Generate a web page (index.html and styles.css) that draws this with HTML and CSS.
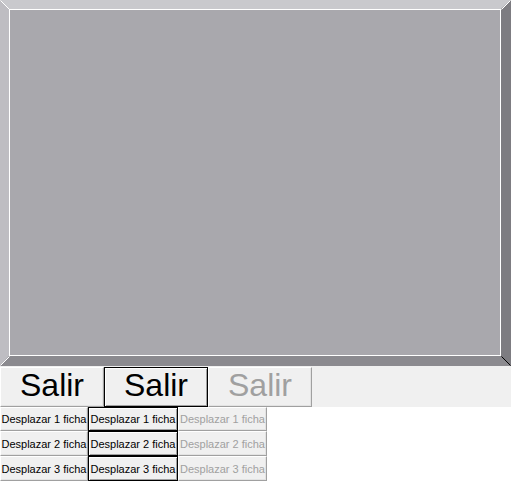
FILE: index.html
```html
<!DOCTYPE html>
<html>
<head>
<meta charset="utf-8">
<link rel="stylesheet" href="styles.css">
</head>
<body>
<div class="panel">
  <div class="panel-inner"></div>
  <svg class="bevel-lines" width="511" height="366" viewBox="0 0 511 366">
    <line x1="0.5" y1="0.5" x2="9.5" y2="9.5" stroke="#ffffff" stroke-width="1"/>
    <line x1="510.5" y1="0.5" x2="501.5" y2="9.5" stroke="#ffffff" stroke-width="1"/>
    <line x1="0.5" y1="365.5" x2="9.5" y2="356.5" stroke="#ffffff" stroke-width="1"/>
    <line x1="501.5" y1="356.5" x2="510.5" y2="365.5" stroke="#000000" stroke-width="1"/>
  </svg>
</div>
<div class="big-row">
  <button class="btn big">Salir</button>
  <button class="btn big default">Salir</button>
  <button class="btn big disabled">Salir</button>
</div>
<div class="small-grid">
  <button class="btn small">Desplazar 1 ficha</button>
  <button class="btn small default">Desplazar 1 ficha</button>
  <button class="btn small disabled">Desplazar 1 ficha</button>
  <button class="btn small">Desplazar 2 ficha</button>
  <button class="btn small default">Desplazar 2 ficha</button>
  <button class="btn small disabled">Desplazar 2 ficha</button>
  <button class="btn small">Desplazar 3 ficha</button>
  <button class="btn small default">Desplazar 3 ficha</button>
  <button class="btn small disabled">Desplazar 3 ficha</button>
</div>
</body>
</html>
```

FILE: styles.css
```css
html, body {
  margin: 0;
  padding: 0;
  background: #ffffff;
  font-family: "Liberation Sans", Arial, sans-serif;
}

.panel {
  position: relative;
  width: 511px;
  height: 366px;
  box-sizing: border-box;
  border-style: solid;
  border-width: 9px 10px 10px 9px;
  border-top-color: #c9c9cd;
  border-left-color: #bebdc2;
  border-right-color: #7d7c81;
  border-bottom-color: #8b8a8f;
}

.panel-inner {
  box-sizing: border-box;
  width: 100%;
  height: 100%;
  background: #a9a8ad;
  border: 1px solid #ffffff;
}

.bevel-lines {
  position: absolute;
  left: -9px;
  top: -9px;
  pointer-events: none;
}

.big-row {
  display: flex;
  width: 511px;
  height: 41px;
  box-sizing: border-box;
  padding-top: 1px;
  background: #f0f0f0;
}

.btn {
  margin: 0;
  padding: 0;
  box-sizing: border-box;
  background: #f0f0f0;
  color: #000000;
  font-family: "Liberation Sans", Arial, sans-serif;
  border-style: solid;
  border-width: 1px;
  border-color: #ffffff #a0a0a0 #a0a0a0 #ffffff;
  box-shadow: inset -1px -1px 0 #e3e3e3;
  display: flex;
  align-items: center;
  justify-content: center;
  white-space: nowrap;
}

.big {
  width: 104px;
  height: 40px;
  font-size: 32px;
  padding-bottom: 3px;
}

.default {
  border-color: #000000;
  box-shadow: inset 1px 1px 0 #ffffff, inset -1px -1px 0 #a0a0a0;
}

.disabled {
  color: #a0a0a0;
}

.small-grid {
  display: grid;
  grid-template-columns: 88px 90px 89px;
  grid-template-rows: 24px 25px 25px;
}

.small {
  width: 100%;
  height: 100%;
  font-size: 11px;
}
```
